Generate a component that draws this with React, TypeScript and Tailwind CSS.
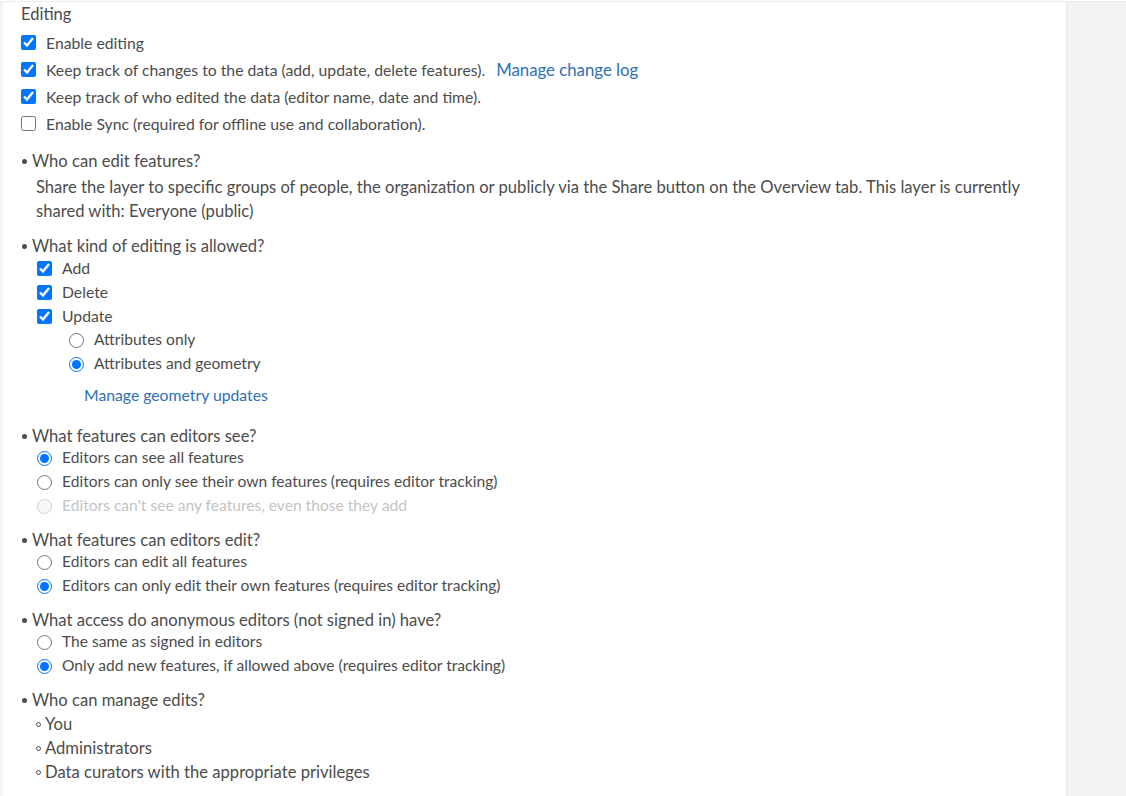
import React from "react";

const font = { fontFamily: '"Lato", "Open Sans", sans-serif' };

function Check({ checked, label, extra }: { checked: boolean; label: string; extra?: React.ReactNode }) {
  return (
    <label className="flex items-center h-[27px]">
      <input type="checkbox" defaultChecked={checked} className="m-0 w-[15px] h-[15px] accent-[#0075ff]" />
      <span className="ml-[10px]">{label}</span>
      {extra}
    </label>
  );
}

function SmallCheck({ checked, label }: { checked: boolean; label: string }) {
  return (
    <label className="flex items-center h-[24px] pl-[34px]">
      <input type="checkbox" defaultChecked={checked} className="m-0 w-[15px] h-[15px] accent-[#0075ff]" />
      <span className="ml-[10px]">{label}</span>
    </label>
  );
}

function Radio({ name, checked, label, disabled, indent }: { name: string; checked?: boolean; label: string; disabled?: boolean; indent?: boolean }) {
  return (
    <label className={"flex items-center h-[24px] text-[15.6px] " + (indent ? "pl-[66px]" : "pl-[34px]")}>
      <input type="radio" name={name} defaultChecked={checked} disabled={disabled} className="m-0 w-[15px] h-[15px] accent-[#0075ff]" />
      <span className={"ml-[10px] " + (disabled ? "text-[#c4c4c4]" : "")}>{label}</span>
    </label>
  );
}

function Heading({ children, mt }: { children: React.ReactNode; mt: string }) {
  return (
    <div className={"flex items-center h-[20px] pl-[19px] text-[16.6px] " + mt}>
      <span className="w-[5px] h-[5px] rounded-full bg-[#4c4c4c]" />
      <span className="ml-[5px]">{children}</span>
    </div>
  );
}

function Sub({ children }: { children: React.ReactNode }) {
  return (
    <div className="flex items-center h-[24px] pl-[33px] text-[16.6px]">
      <span className="w-[5px] h-[5px] rounded-full border border-[#4c4c4c]" />
      <span className="ml-[4px]">{children}</span>
    </div>
  );
}

export default function App() {
  return (
    <div className="w-[1126px] h-[796px] bg-white flex flex-col text-[15.75px] text-[#4c4c4c] overflow-hidden" style={font}>
      <div className="h-[1px] shrink-0" />
      <div className="flex flex-1 border-t border-[#ebebeb]">
        <div className="w-[3px] bg-[#f3f3f3]" />
        <div className="w-[1063px] bg-white">
          <div className="pl-[18px] h-[24px] flex items-center text-[16.5px]">Editing</div>
          <div className="pl-[18px] mt-[3px]">
            <Check checked label="Enable editing" />
            <Check
              checked
              label="Keep track of changes to the data (add, update, delete features)."
              extra={<span className="ml-[11px] text-[#2f70b6] text-[16.8px]">Manage change log</span>}
            />
            <Check checked label="Keep track of who edited the data (editor name, date and time)." />
            <Check checked={false} label="Enable Sync (required for offline use and collaboration)." />
          </div>

          <Heading mt="mt-[14px]">Who can edit features?</Heading>
          <p className="pl-[33px] pr-[20px] mt-[4px] leading-[24px] text-[16.6px]">
            Share the layer to specific groups of people, the organization or publicly via the Share button on the Overview tab. This layer is currently shared with: Everyone (public)
          </p>

          <Heading mt="mt-[13px]">What kind of editing is allowed?</Heading>
          <SmallCheck checked label="Add" />
          <SmallCheck checked label="Delete" />
          <SmallCheck checked label="Update" />
          <Radio indent name="upd" label="Attributes only" />
          <Radio indent name="upd" checked label="Attributes and geometry" />
          <div className="pl-[81px] mt-[7px] h-[24px] flex items-center text-[#2f70b6]">Manage geometry updates</div>

          <Heading mt="mt-[19px]">What features can editors see?</Heading>
          <Radio name="see" checked label="Editors can see all features" />
          <Radio name="see" label="Editors can only see their own features (requires editor tracking)" />
          <Radio name="see" disabled label="Editors can't see any features, even those they add" />

          <Heading mt="mt-[12px]">What features can editors edit?</Heading>
          <Radio name="edit" label="Editors can edit all features" />
          <Radio name="edit" checked label="Editors can only edit their own features (requires editor tracking)" />

          <Heading mt="mt-[12px]">What access do anonymous editors (not signed in) have?</Heading>
          <Radio name="anon" label="The same as signed in editors" />
          <Radio name="anon" checked label="Only add new features, if allowed above (requires editor tracking)" />

          <Heading mt="mt-[12px]">Who can manage edits?</Heading>
          <div className="mt-[2px]">
            <Sub>You</Sub>
            <Sub>Administrators</Sub>
            <Sub>Data curators with the appropriate privileges</Sub>
          </div>
        </div>
        <div className="flex-1 bg-[#f3f3f3] border-l border-[#e6e6e6]" />
      </div>
    </div>
  );
}
